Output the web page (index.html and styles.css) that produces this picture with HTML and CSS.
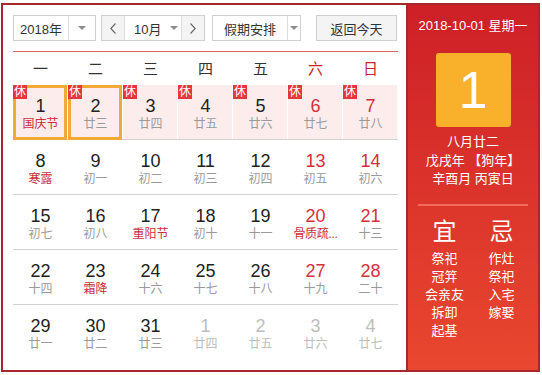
FILE: index.html
```html
<!DOCTYPE html>
<html lang="zh-CN">
<head>
<meta charset="utf-8">
<title>万年历</title>
<link rel="stylesheet" href="styles.css">
</head>
<body>
<div class="calendar">
  <div class="main">
    <div class="controls">
      <div class="select year">
        <span class="sel-text">2018年</span>
        <span class="sel-arrow"><i class="tri"></i></span>
      </div>
      <div class="month-group">
        <span class="nav"><svg width="6" height="11" viewBox="0 0 6 11"><polyline points="5.5,0.5 0.8,5.5 5.5,10.5" fill="none" stroke="#666" stroke-width="1.1"/></svg></span>
        <span class="month-sel"><span class="sel-text">10月</span><i class="tri"></i></span>
        <span class="nav"><svg width="6" height="11" viewBox="0 0 6 11"><polyline points="0.5,0.5 5.2,5.5 0.5,10.5" fill="none" stroke="#666" stroke-width="1.1"/></svg></span>
      </div>
      <div class="select holiday">
        <span class="sel-text">假期安排</span>
        <span class="sel-arrow"><i class="tri"></i></span>
      </div>
      <div class="today-btn">返回今天</div>
    </div>
    <div class="weekdays">
      <span>一</span><span>二</span><span>三</span><span>四</span><span>五</span><span class="we">六</span><span class="we">日</span>
    </div>
    <div class="grid">
      <div class="row rest">
        <div class="cell sel"><b class="badge">休</b><span class="num">1</span><span class="lunar fest">国庆节</span></div>
        <div class="cell sel"><b class="badge">休</b><span class="num">2</span><span class="lunar">廿三</span></div>
        <div class="cell"><b class="badge">休</b><span class="num">3</span><span class="lunar">廿四</span></div>
        <div class="cell"><b class="badge">休</b><span class="num">4</span><span class="lunar">廿五</span></div>
        <div class="cell"><b class="badge">休</b><span class="num">5</span><span class="lunar">廿六</span></div>
        <div class="cell wkd"><b class="badge">休</b><span class="num">6</span><span class="lunar">廿七</span></div>
        <div class="cell wkd"><b class="badge">休</b><span class="num">7</span><span class="lunar">廿八</span></div>
      </div>
      <div class="row">
        <div class="cell"><span class="num">8</span><span class="lunar fest">寒露</span></div>
        <div class="cell"><span class="num">9</span><span class="lunar">初一</span></div>
        <div class="cell"><span class="num">10</span><span class="lunar">初二</span></div>
        <div class="cell"><span class="num">11</span><span class="lunar">初三</span></div>
        <div class="cell"><span class="num">12</span><span class="lunar">初四</span></div>
        <div class="cell wkd"><span class="num">13</span><span class="lunar">初五</span></div>
        <div class="cell wkd"><span class="num">14</span><span class="lunar">初六</span></div>
      </div>
      <div class="row">
        <div class="cell"><span class="num">15</span><span class="lunar">初七</span></div>
        <div class="cell"><span class="num">16</span><span class="lunar">初八</span></div>
        <div class="cell"><span class="num">17</span><span class="lunar fest">重阳节</span></div>
        <div class="cell"><span class="num">18</span><span class="lunar">初十</span></div>
        <div class="cell"><span class="num">19</span><span class="lunar">十一</span></div>
        <div class="cell wkd"><span class="num">20</span><span class="lunar fest short">骨质疏...</span></div>
        <div class="cell wkd"><span class="num">21</span><span class="lunar">十三</span></div>
      </div>
      <div class="row">
        <div class="cell"><span class="num">22</span><span class="lunar">十四</span></div>
        <div class="cell"><span class="num">23</span><span class="lunar fest">霜降</span></div>
        <div class="cell"><span class="num">24</span><span class="lunar">十六</span></div>
        <div class="cell"><span class="num">25</span><span class="lunar">十七</span></div>
        <div class="cell"><span class="num">26</span><span class="lunar">十八</span></div>
        <div class="cell wkd"><span class="num">27</span><span class="lunar">十九</span></div>
        <div class="cell wkd"><span class="num">28</span><span class="lunar">二十</span></div>
      </div>
      <div class="row last">
        <div class="cell"><span class="num">29</span><span class="lunar">廿一</span></div>
        <div class="cell"><span class="num">30</span><span class="lunar">廿二</span></div>
        <div class="cell"><span class="num">31</span><span class="lunar">廿三</span></div>
        <div class="cell other"><span class="num">1</span><span class="lunar">廿四</span></div>
        <div class="cell other"><span class="num">2</span><span class="lunar">廿五</span></div>
        <div class="cell other"><span class="num">3</span><span class="lunar">廿六</span></div>
        <div class="cell other"><span class="num">4</span><span class="lunar">廿七</span></div>
      </div>
    </div>
  </div>
  <div class="side">
    <div class="side-date">2018-10-01 星期一</div>
    <div class="big-day">1</div>
    <div class="lunar-info">
      <div>八月廿二</div>
      <div>戊戌年 【狗年】</div>
      <div>辛酉月 丙寅日</div>
    </div>
    <div class="side-line"></div>
    <div class="yiji">
      <div class="col">
        <div class="yj-title">宜</div>
        <div>祭祀</div><div>冠笄</div><div>会亲友</div><div>拆卸</div><div>起基</div>
      </div>
      <div class="col">
        <div class="yj-title">忌</div>
        <div>作灶</div><div>祭祀</div><div>入宅</div><div>嫁娶</div>
      </div>
    </div>
  </div>
</div>
</body>
</html>
```
FILE: styles.css
```css
* { box-sizing: border-box; }
body {
  margin: 3px 0 0 1px;
  font-family: "Liberation Sans", "Noto Sans CJK SC", sans-serif;
  color: #333;
  background: #fff;
}
.calendar {
  width: 539px;
  height: 369px;
  border: 2px solid #a8272c;
  display: flex;
}
.main {
  width: 403px;
  padding: 10px 8px 10px 10px;
}
.controls {
  display: flex;
  height: 26px;
  font-size: 13px;
  white-space: nowrap;
}
.select {
  display: flex;
  border: 1px solid #cfcfcf;
  background: #fff;
}
.sel-text {
  display: flex;
  align-items: center;
  justify-content: center;
}
.sel-arrow {
  display: flex;
  align-items: center;
  justify-content: center;
  border-left: 1px solid #dcdcdc;
}
.tri {
  display: block;
  flex: none;
  width: 0;
  height: 0;
  border-left: 4px solid transparent;
  border-right: 4px solid transparent;
  border-top: 4px solid #8c8c8c;
}
.year { width: 83px; }
.year .sel-text { width: 54px; }
.year .sel-arrow { flex: 1; }
.month-group {
  display: flex;
  width: 104px;
  margin-left: 5px;
  border: 1px solid #cfcfcf;
}
.nav {
  width: 22px;
  flex: none;
  background: #f4f4f4;
  display: flex;
  align-items: center;
  justify-content: center;
}
.month-sel {
  flex: 1;
  display: flex;
  align-items: center;
  border-left: 1px solid #dcdcdc;
  border-right: 1px solid #dcdcdc;
  padding-left: 9px;
}
.month-sel .tri { margin-left: 9px; }
.holiday {
  width: 89px;
  margin-left: 7px;
}
.holiday .sel-text { width: 74px; }
.holiday .sel-arrow { flex: 1; }
.today-btn {
  width: 81px;
  margin-left: 15px;
  border: 1px solid #cfcfcf;
  background: #f4f4f4;
  display: flex;
  align-items: center;
  justify-content: center;
}
.weekdays {
  margin-top: 10px;
  border-top: 1px solid #d9666a;
  display: grid;
  grid-template-columns: repeat(7, 55px);
  height: 34px;
  line-height: 33px;
  font-size: 15px;
  text-align: center;
}
.weekdays .we { color: #c8262e; }
.row {
  display: grid;
  grid-template-columns: repeat(7, 55px);
  height: 55px;
  border-bottom: 1px solid #d2d2d2;
}
.row.last { border-bottom: none; }
.cell {
  position: relative;
  display: flex;
  flex-direction: column;
  align-items: center;
  padding-top: 11px;
}
.rest .cell {
  background: #fdecec;
  box-shadow: inset -1px 0 0 #fff;
}
.sel::after {
  content: "";
  position: absolute;
  left: 0;
  top: 0;
  right: 1px;
  bottom: -1px;
  border: 3px solid #f3a936;
}
.badge {
  position: absolute;
  left: 0;
  top: 0;
  z-index: 2;
  width: 14px;
  height: 14px;
  background: #e5363c;
  color: #fff;
  font-weight: normal;
  font-size: 12px;
  line-height: 14px;
  text-align: center;
}
.num {
  font-size: 18px;
  line-height: 20px;
  color: #222;
}
.lunar {
  font-size: 12px;
  line-height: 17px;
  color: #9a9a9a;
  white-space: nowrap;
}
.lunar.short { letter-spacing: -0.3px; }
.lunar.fest { color: #c9303a; }
.wkd .num { color: #d3303c; }
.other .num, .other .lunar { color: #bdbdbd; }
.side {
  width: 132px;
  border-left: 2px solid #a8272c;
  background: linear-gradient(#cd2027, #e9472f);
  color: #fff;
  display: flex;
  flex-direction: column;
  align-items: center;
  padding-top: 12px;
}
.side-date {
  font-size: 13px;
  line-height: 18px;
}
.big-day {
  margin-top: 18px;
  width: 75px;
  height: 74px;
  border-radius: 3px;
  background: #f9b02a;
  font-size: 52px;
  line-height: 74px;
  text-align: center;
}
.lunar-info {
  margin-top: 6px;
  font-size: 13px;
  line-height: 18.5px;
  text-align: center;
}
.side-line {
  margin-top: 15px;
  width: 110px;
  height: 2px;
  background: #f06d5d;
}
.yiji {
  margin-top: 12px;
  display: grid;
  grid-template-columns: 57px 57px;
  font-size: 13px;
  line-height: 18px;
  text-align: center;
}
.yj-title {
  font-size: 24px;
  line-height: 28px;
  margin-bottom: 4px;
}
```
